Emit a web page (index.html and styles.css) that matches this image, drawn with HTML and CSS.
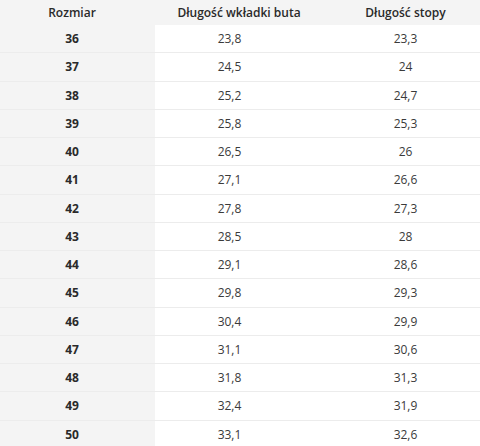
FILE: index.html
```html
<!DOCTYPE html>
<html lang="pl">
<head>
<meta charset="utf-8">
<title>Tabela rozmiarów</title>
<link rel="stylesheet" href="styles.css">
</head>
<body>
<div class="size-table">
  <div class="row head">
    <div class="cell c1">Rozmiar</div>
    <div class="cell c2">Długość wkładki buta</div>
    <div class="cell c3">Długość stopy</div>
  </div>
  <div class="row"><div class="cell c1">36</div><div class="cell c2">23,8</div><div class="cell c3">23,3</div></div>
  <div class="row"><div class="cell c1">37</div><div class="cell c2">24,5</div><div class="cell c3">24</div></div>
  <div class="row"><div class="cell c1">38</div><div class="cell c2">25,2</div><div class="cell c3">24,7</div></div>
  <div class="row"><div class="cell c1">39</div><div class="cell c2">25,8</div><div class="cell c3">25,3</div></div>
  <div class="row"><div class="cell c1">40</div><div class="cell c2">26,5</div><div class="cell c3">26</div></div>
  <div class="row"><div class="cell c1">41</div><div class="cell c2">27,1</div><div class="cell c3">26,6</div></div>
  <div class="row"><div class="cell c1">42</div><div class="cell c2">27,8</div><div class="cell c3">27,3</div></div>
  <div class="row"><div class="cell c1">43</div><div class="cell c2">28,5</div><div class="cell c3">28</div></div>
  <div class="row"><div class="cell c1">44</div><div class="cell c2">29,1</div><div class="cell c3">28,6</div></div>
  <div class="row"><div class="cell c1">45</div><div class="cell c2">29,8</div><div class="cell c3">29,3</div></div>
  <div class="row"><div class="cell c1">46</div><div class="cell c2">30,4</div><div class="cell c3">29,9</div></div>
  <div class="row"><div class="cell c1">47</div><div class="cell c2">31,1</div><div class="cell c3">30,6</div></div>
  <div class="row"><div class="cell c1">48</div><div class="cell c2">31,8</div><div class="cell c3">31,3</div></div>
  <div class="row"><div class="cell c1">49</div><div class="cell c2">32,4</div><div class="cell c3">31,9</div></div>
  <div class="row"><div class="cell c1">50</div><div class="cell c2">33,1</div><div class="cell c3">32,6</div></div>
</div>
</body>
</html>
```
FILE: styles.css
```css
html, body {
  margin: 0;
  padding: 0;
  background: #ffffff;
}
body {
  font-family: "Open Sans", "Liberation Sans", sans-serif;
  font-size: 12px;
  color: #3a3a3a;
  overflow: hidden;
}
.size-table {
  display: flex;
  flex-direction: column;
  width: 480px;
}
.row {
  display: grid;
  grid-template-columns: 155px 182px 143px;
  height: 28.25px;
  box-sizing: border-box;
  border-bottom: 1px solid #ececec;
}
.row.head {
  height: 25px;
  background: #f4f4f4;
  border-bottom: none;
  font-weight: 600;
  color: #2a2a2a;
}
.cell {
  display: flex;
  align-items: center;
  justify-content: center;
}
.c1 {
  background: #f4f4f4;
  padding-right: 11px;
  font-weight: 700;
  color: #2a2a2a;
}
.c2 {
  padding-right: 33px;
}
.head .c1 {
  font-weight: 600;
}
.head .c2 {
  padding-right: 14px;
}
.c3 {
  padding-right: 6px;
}
```
